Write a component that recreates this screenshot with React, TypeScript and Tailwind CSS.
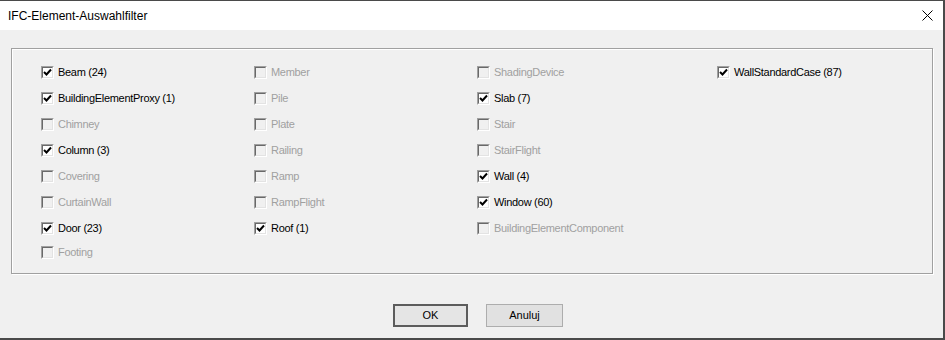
import React from 'react';

type Item = { label: string; on?: boolean; disabled?: boolean };

const columns: Item[][] = [
  [
    { label: 'Beam (24)', on: true },
    { label: 'BuildingElementProxy (1)', on: true },
    { label: 'Chimney', disabled: true },
    { label: 'Column (3)', on: true },
    { label: 'Covering', disabled: true },
    { label: 'CurtainWall', disabled: true },
    { label: 'Door (23)', on: true },
    { label: 'Footing', disabled: true },
  ],
  [
    { label: 'Member', disabled: true },
    { label: 'Pile', disabled: true },
    { label: 'Plate', disabled: true },
    { label: 'Railing', disabled: true },
    { label: 'Ramp', disabled: true },
    { label: 'RampFlight', disabled: true },
    { label: 'Roof (1)', on: true },
  ],
  [
    { label: 'ShadingDevice', disabled: true },
    { label: 'Slab (7)', on: true },
    { label: 'Stair', disabled: true },
    { label: 'StairFlight', disabled: true },
    { label: 'Wall (4)', on: true },
    { label: 'Window (60)', on: true },
    { label: 'BuildingElementComponent', disabled: true },
  ],
  [{ label: 'WallStandardCase (87)', on: true }],
];

const colWidths = ['w-[213px]', 'w-[223px]', 'w-[240px]', 'w-[200px]'];

function CheckBox({ item }: { item: Item }) {
  return (
    <div className="flex h-[26px] items-center">
      {/* classic sunken 3d box */}
      <span className="flex h-[13px] w-[13px] border-t border-l border-t-[#a0a0a0] border-l-[#a0a0a0] border-b border-r border-b-white border-r-white">
        <span
          className={
            'flex flex-1 items-center justify-center border-t border-l border-b border-r border-t-[#696969] border-l-[#696969] border-b-[#e3e3e3] border-r-[#e3e3e3] ' +
            (item.disabled ? 'bg-[#f0f0f0]' : 'bg-white')
          }
        >
          {item.on && (
            <svg width="9" height="9" viewBox="0 0 9 9">
              <path d="M1 4 L3.5 6.5 L8 1.5" fill="none" stroke="#000" strokeWidth="2" />
            </svg>
          )}
        </span>
      </span>
      <span
        className={
          'ml-[4px] text-[11px] leading-none tracking-[-0.3px] ' +
          (item.disabled ? 'text-[#a0a0a0]' : 'text-black')
        }
      >
        {item.label}
      </span>
    </div>
  );
}

export default function App() {
  return (
    <div
      className="flex h-[340px] w-[945px] flex-col overflow-hidden border-t border-r-2 border-b-2 border-[#4a4a4a] bg-[#f0f0f0]"
      style={{ fontFamily: '"Liberation Sans", Arial, sans-serif' }}
    >
      {/* title bar */}
      <div className="flex h-[29px] shrink-0 items-center justify-between bg-white pl-[8px] pr-[9px]">
        <span className="text-[12px] text-black">IFC-Element-Auswahlfilter</span>
        <svg width="11" height="11" viewBox="0 0 11 11" className="mr-[1px]">
          <path d="M0.5 0.5 L10.5 10.5 M10.5 0.5 L0.5 10.5" stroke="#000" strokeWidth="1" />
        </svg>
      </div>

      {/* group box */}
      <div className="ml-[11px] mt-[18px] h-[226px] w-[922px] border border-[#a0a0a0] pl-[29px] pt-[10px] shadow-[1px_1px_0_#fff,inset_1px_1px_0_#fff]">
        <div className="flex">
          {columns.map((col, i) => (
            <div key={i} className={'flex flex-col ' + colWidths[i]}>
              {col.map((item, j) => (
                <div key={item.label} className={j === 7 ? '-mt-[2px]' : ''}>
                  <CheckBox item={item} />
                </div>
              ))}
            </div>
          ))}
        </div>
      </div>

      {/* buttons */}
      <div className="mt-[30px] flex gap-[18px] pl-[393px]">
        <button className="flex h-[23px] w-[75px] items-center justify-center border-2 border-[#5c5c5c] bg-[#e5e5e5] text-[11px] text-black">
          OK
        </button>
        <button className="flex h-[23px] w-[77px] items-center justify-center border border-[#adadad] bg-[#e1e1e1] text-[11px] text-black">
          Anuluj
        </button>
      </div>
    </div>
  );
}
